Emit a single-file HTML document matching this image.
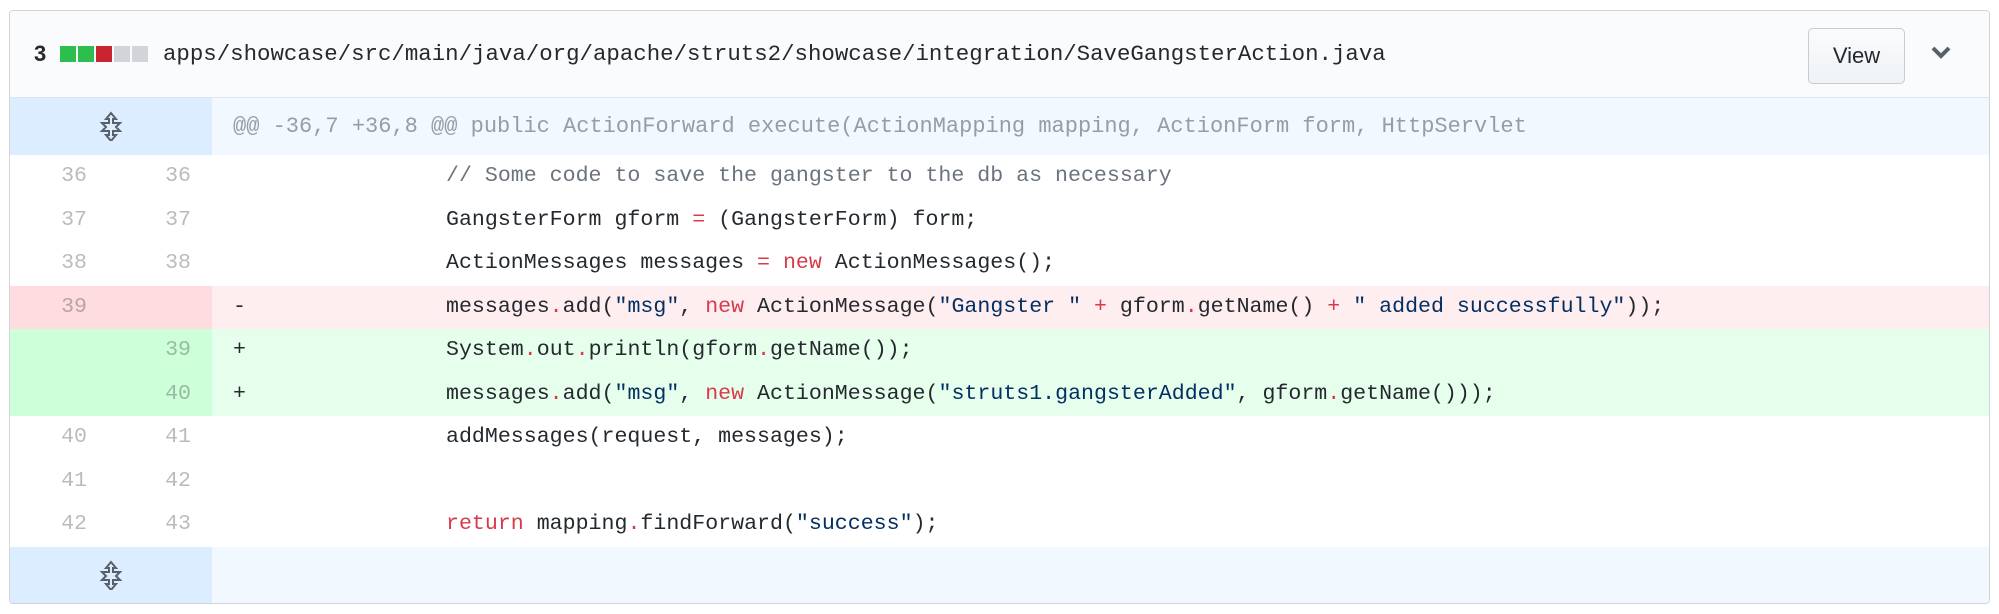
<!DOCTYPE html>
<html><head><meta charset="utf-8"><style>
body{margin:0;background:#fff;width:1999px;height:614px;overflow:hidden;font-family:"Liberation Mono",monospace;}
.box{position:absolute;left:9px;top:10px;width:1979px;height:592px;border:1px solid #d1d5da;border-radius:4px;overflow:hidden;}
.hdr{position:absolute;left:0;top:0;right:0;height:86px;background:#fafbfc;border-bottom:1px solid #e1e4e8;}
.n3{position:absolute;left:24px;top:30px;font:bold 22px "Liberation Sans",sans-serif;color:#24292e;}
.sq{position:absolute;top:35px;width:16px;height:16px;}
.fn{position:absolute;left:153px;top:30px;font-size:22.4px;color:#24292e;}
.btn{position:absolute;left:1798px;top:17px;width:95px;height:54px;border:1px solid #c8cbcf;border-radius:5px;background:linear-gradient(#fafbfc,#eff3f6);font:22px "Liberation Sans",sans-serif;color:#24292e;text-align:center;line-height:54px;}
.row{position:absolute;left:0;right:0;height:43.5px;font-size:21.6px;line-height:43.5px;white-space:pre;}
.g1,.g2{position:absolute;top:0;height:100%;width:101px;color:rgba(27,31,35,.3);text-align:right;box-sizing:border-box;}
.g1{left:0;padding-right:24px}.g2{left:101px;padding-right:21px}
.c{position:absolute;left:202px;right:0;top:0;height:100%;color:#24292e;}
.s{position:absolute;left:21px}.t{position:absolute;left:234px}
.k{color:#d73a49}.st{color:#032f62}.cm{color:#6a737d}
.hunk .g{position:absolute;left:0;width:202px;height:100%;background:#dbedff;}
.hunk .c{background:#f1f8ff;color:#959da5;padding-left:21px;font-size:22px;}
.del .g1,.del .g2{background:#ffdce0}.del .c{background:#ffeef0}
.add .g1,.add .g2{background:#cdffd8}.add .c{background:#e6ffed}
</style></head><body>
<div class="box">
<div class="hdr">
<div class="n3">3</div>
<div class="sq" style="left:50px;background:#2cbe4e"></div>
<div class="sq" style="left:68px;background:#2cbe4e"></div>
<div class="sq" style="left:86px;background:#cb2431"></div>
<div class="sq" style="left:104px;background:#d1d5da"></div>
<div class="sq" style="left:122px;background:#d1d5da"></div>
<div class="fn">apps/showcase/src/main/java/org/apache/struts2/showcase/integration/SaveGangsterAction.java</div>
<div class="btn">View</div>
<svg style="position:absolute;left:1920px;top:33px" width="22" height="16" viewBox="0 0 22 16"><path d="M3 4l8 8 8-8" fill="none" stroke="#586069" stroke-width="4"/></svg>
</div>
<div class="row hunk" style="top:87px;height:57px;line-height:57px"><div class="g"><svg style="position:absolute;left:89px;top:13px" width="24" height="30" viewBox="0 0 24 30"><path d="M12 2l-5 6h3v4H3l4 4-4 4h7v4H7l5 6 5-6h-3v-4h7l-4-4 4-4h-7V8h3z" fill="none" stroke="#586069" stroke-width="2"/></svg></div><div class="c">@@ -36,7 +36,8 @@ public ActionForward execute(ActionMapping mapping, ActionForm form, HttpServlet</div></div>
<div class="row" style="top:144px"><div class="g1">36</div><div class="g2">36</div><div class="c"><span class="t cm">// Some code to save the gangster to the db as necessary</span></div></div>
<div class="row" style="top:187.5px"><div class="g1">37</div><div class="g2">37</div><div class="c"><span class="t">GangsterForm gform <span class="k">=</span> (GangsterForm) form;</span></div></div>
<div class="row" style="top:231px"><div class="g1">38</div><div class="g2">38</div><div class="c"><span class="t">ActionMessages messages <span class="k">=</span> <span class="k">new</span> ActionMessages();</span></div></div>
<div class="row del" style="top:274.5px"><div class="g1">39</div><div class="g2"></div><div class="c"><span class="s">-</span><span class="t">messages<span class="k">.</span>add(<span class="st">"msg"</span>, <span class="k">new</span> ActionMessage(<span class="st">"Gangster "</span> <span class="k">+</span> gform<span class="k">.</span>getName() <span class="k">+</span> <span class="st">" added successfully"</span>));</span></div></div>
<div class="row add" style="top:318px"><div class="g1"></div><div class="g2">39</div><div class="c"><span class="s">+</span><span class="t">System<span class="k">.</span>out<span class="k">.</span>println(gform<span class="k">.</span>getName());</span></div></div>
<div class="row add" style="top:361.5px"><div class="g1"></div><div class="g2">40</div><div class="c"><span class="s">+</span><span class="t">messages<span class="k">.</span>add(<span class="st">"msg"</span>, <span class="k">new</span> ActionMessage(<span class="st">"struts1.gangsterAdded"</span>, gform<span class="k">.</span>getName()));</span></div></div>
<div class="row" style="top:405px"><div class="g1">40</div><div class="g2">41</div><div class="c"><span class="t">addMessages(request, messages);</span></div></div>
<div class="row" style="top:448.5px"><div class="g1">41</div><div class="g2">42</div><div class="c"></div></div>
<div class="row" style="top:492px"><div class="g1">42</div><div class="g2">43</div><div class="c"><span class="t"><span class="k">return</span> mapping<span class="k">.</span>findForward(<span class="st">"success"</span>);</span></div></div>
<div class="row hunk" style="top:535.5px;height:57px"><div class="g"><svg style="position:absolute;left:89px;top:13px" width="24" height="30" viewBox="0 0 24 30"><path d="M12 2l-5 6h3v4H3l4 4-4 4h7v4H7l5 6 5-6h-3v-4h7l-4-4 4-4h-7V8h3z" fill="none" stroke="#586069" stroke-width="2"/></svg></div><div class="c"></div></div>
</div>
</body></html>
